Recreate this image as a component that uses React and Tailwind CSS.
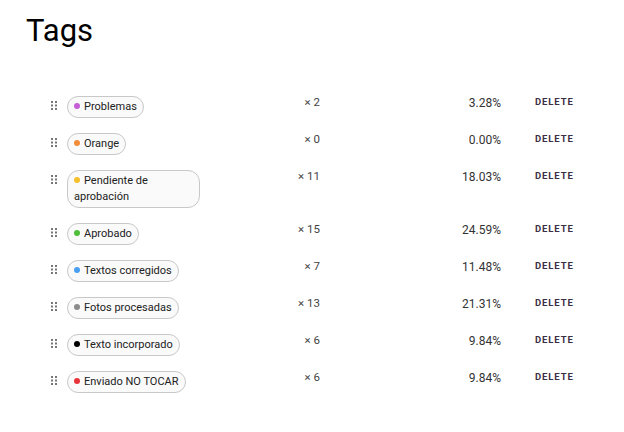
import React from 'react';

const tags = [
  { name: 'Problemas', color: '#c65fd6', count: 2, pct: '3.28%' },
  { name: 'Orange', color: '#f28c38', count: 0, pct: '0.00%' },
  { name: 'Pendiente de aprobación', color: '#f5c02c', count: 11, pct: '18.03%' },
  { name: 'Aprobado', color: '#4fbf3a', count: 15, pct: '24.59%' },
  { name: 'Textos corregidos', color: '#4a9ff0', count: 7, pct: '11.48%' },
  { name: 'Fotos procesadas', color: '#8c8c8c', count: 13, pct: '21.31%' },
  { name: 'Texto incorporado', color: '#000000', count: 6, pct: '9.84%' },
  { name: 'Enviado NO TOCAR', color: '#e8333a', count: 6, pct: '9.84%' },
];

function DragHandle() {
  return (
    <svg width="6" height="9" viewBox="0 0 6 9" className="mt-[7px] block">
      {[0, 1].map(c => [0, 1, 2].map(r => (
        <rect key={`${c}-${r}`} x={c * 4} y={r * 3.5} width="2" height="2" fill="#777" />
      )))}
    </svg>
  );
}

export default function App() {
  return (
    <div className="min-h-[432px] bg-white text-[#212121]" style={{ fontFamily: 'Roboto, "Liberation Sans", sans-serif' }}>
      <h1 className="pl-[26px] pt-[15px] text-[31px] leading-none font-normal text-black">Tags</h1>

      <div className="mt-[48px] pl-[51px]">
        {tags.map(t => (
          <div key={t.name} className="flex items-start pb-[13px]">
            <div className="w-[16px]">
              <DragHandle />
            </div>
            <div className="flex w-[220px] items-start">
              <div className="mt-[2px] max-w-[133px] rounded-[12px] border border-[#c8c8c8] bg-[#fafafa] px-[6px] py-[2px] text-[11px] leading-[16px] text-[#212121]">
                <span className="mr-[4px] inline-block h-[6px] w-[6px] rounded-full align-[1px]" style={{ backgroundColor: t.color }} />
                {t.name}
              </div>
            </div>
            <div className="w-[33px] text-right text-[11.5px] leading-[16px] text-[#444]">× {t.count}</div>
            <div className="w-[181px] pt-[1px] text-right text-[12px] leading-[16px] text-[#333]">{t.pct}</div>
            <div className="pl-[34px] pt-[2px]">
              <button className="block text-[9.5px] leading-[12px] font-bold tracking-[0.9px] text-[#3b2f45]">DELETE</button>
            </div>
          </div>
        ))}
      </div>
    </div>
  );
}
